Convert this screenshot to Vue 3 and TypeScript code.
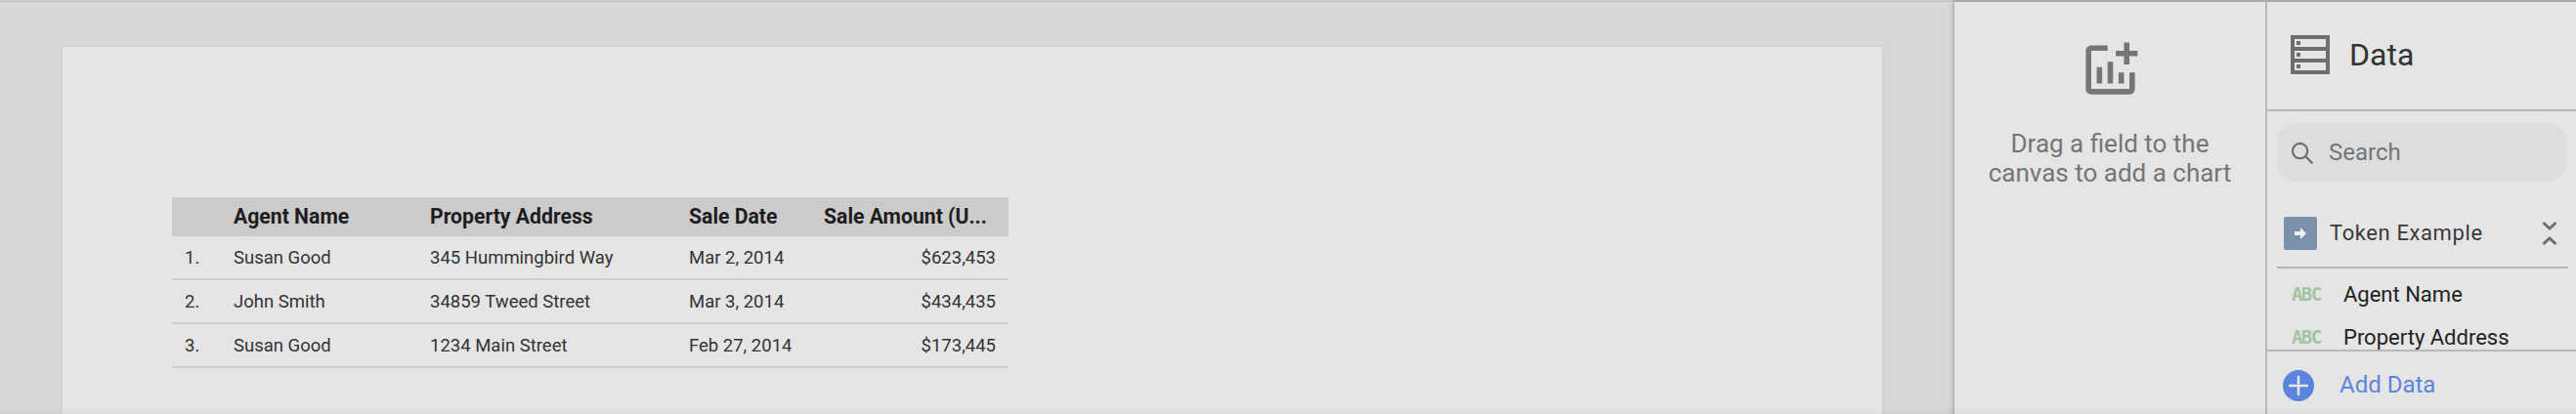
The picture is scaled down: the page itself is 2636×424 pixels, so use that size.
<script setup lang="ts">
const rows = [
  { name: "Susan Good", address: "345 Hummingbird Way", date: "Mar 2, 2014", amount: "$623,453" },
  { name: "John Smith", address: "34859 Tweed Street", date: "Mar 3, 2014", amount: "$434,435" },
  { name: "Susan Good", address: "1234 Main Street", date: "Feb 27, 2014", amount: "$173,445" },
];
const fields = ["Agent Name", "Property Address"];
</script>

<template>
  <div class="editor">
    <main class="canvas">
      <section class="page">
        <div class="table">
          <div class="row head">
            <span></span>
            <span>Agent Name</span>
            <span>Property Address</span>
            <span>Sale Date</span>
            <span>Sale Amount (U...</span>
          </div>
          <div v-for="(row, i) in rows" :key="i" class="row">
            <span>{{ i + 1 }}.</span>
            <span>{{ row.name }}</span>
            <span>{{ row.address }}</span>
            <span>{{ row.date }}</span>
            <span class="amount">{{ row.amount }}</span>
          </div>
        </div>
      </section>
    </main>

    <aside class="props">
      <svg class="add-chart" viewBox="0 0 24 24" fill="#757575">
        <path d="M22 5v2h-3v3h-2V7h-3V5h3V2h2v3h3zm-3 14H5V5h6V3H5c-1.1 0-2 .9-2 2v14c0 1.1.9 2 2 2h14c1.1 0 2-.9 2-2v-6h-2v6zm-4-6v4h2v-4h-2zm-4 4h2V9h-2v8zm-2 0v-6H7v6h2z" />
      </svg>
      <p class="hint">Drag a field to the<br />canvas to add a chart</p>
    </aside>

    <aside class="data">
      <header class="data-head">
        <svg class="data-icon" viewBox="0 0 40 40">
          <path fill="#6e6e6e" fill-rule="evenodd" d="M0 0h40v40H0zM4 4v8h32V4zM4 16v8h32v-8zM4 28v8h32v-8z" />
          <path fill="#6e6e6e" d="M6 6h4v4H6zM6 18h4v4H6zM6 30h4v4H6z" />
        </svg>
        <h1>Data</h1>
      </header>

      <div class="search">
        <svg class="search-icon" viewBox="0 0 24 24" fill="none" stroke="#6b6b6b" stroke-width="2.2">
          <circle cx="10" cy="10" r="8" />
          <path d="M16 16l7.500 7.500" />
        </svg>
        <span>Search</span>
      </div>

      <div class="source">
        <span class="source-icon">
          <svg viewBox="0 0 14 14" width="14" height="14" fill="#eef1f5">
            <path d="M1 5h6V1l6 6-6 6V9H1z" />
          </svg>
        </span>
        <span class="source-name">Token Example</span>
        <svg class="collapse" viewBox="0 0 16 26" fill="none" stroke="#6e6e6e" stroke-width="3">
          <path d="M1.500 2l6.500 6 6.500-6M1.500 24l6.500-6 6.500 6" />
        </svg>
      </div>

      <ul class="fields">
        <li v-for="field in fields" :key="field">
          <span class="abc">ABC</span>
          <span>{{ field }}</span>
        </li>
      </ul>

      <footer class="add-data">
        <svg class="plus" viewBox="0 0 32 32">
          <circle cx="16" cy="16" r="16" fill="#5b84dc" />
          <path d="M16 6v20M6 16h20" stroke="#e5e5e5" stroke-width="2.500" />
        </svg>
        <span class="add-label">Add Data</span>
      </footer>
    </aside>
  </div>
</template>

<style>
html,
body {
  margin: 0;
  overflow: hidden;
}
</style>

<style scoped>
.editor {
  position: relative;
  display: flex;
  width: 2636px;
  height: 424px;
  overflow: hidden;
  font-family: Roboto, sans-serif;
  background: #e5e5e5;
}

.editor::after {
  content: "";
  position: absolute;
  left: 0;
  right: 0;
  bottom: 0;
  height: 5px;
  background: linear-gradient(rgba(0, 0, 0, 0), rgba(0, 0, 0, 0.035));
}

.canvas {
  width: 1998px;
  flex: none;
  box-sizing: border-box;
  padding: 45px 72px 0 64px;
  background: #d7d7d7;
  border-top: 3px solid #c9c9c9;
  box-shadow: inset 0 1px #e2e2e2, inset -6px 0 6px -6px #bdbdbd;
}

.page {
  height: 400px;
  box-sizing: border-box;
  padding: 154px 0 0 112px;
  background: #e5e5e5;
  box-shadow: 0 0 3px #c4c4c4;
}

.table {
  width: 856px;
}

.row {
  display: grid;
  grid-template-columns: 63px 201px 265px 138px 189px;
  align-items: center;
  height: 45px;
  box-sizing: border-box;
  border-bottom: 2px solid #cdcdcd;
  font-size: 18.5px;
  color: #333;
}

.row span:first-child {
  padding-left: 13px;
}

.head {
  height: 40px;
  padding-bottom: 2px;
  border-bottom: 0;
  background: #cbcbcb;
  font-size: 21.2px;
  font-weight: 700;
  color: #1d1d1d;
}

.amount {
  padding-right: 13px;
  text-align: right;
}

.props {
  width: 322px;
  flex: none;
  box-sizing: border-box;
  display: flex;
  flex-direction: column;
  align-items: center;
  border-left: 2px solid #b8b8b8;
  border-right: 2px solid #b8b8b8;
  border-top: 2px solid #a8a8a8;
}

.add-chart {
  width: 67px;
  height: 67px;
  margin-top: 36px;
}

.hint {
  margin: 27px 0 0;
  font-size: 26px;
  line-height: 30px;
  text-align: center;
  color: #757575;
}

.data {
  flex: 1;
  display: flex;
  flex-direction: column;
  border-top: 2px solid #a8a8a8;
}

.data-head {
  display: flex;
  align-items: center;
  gap: 20px;
  height: 112px;
  flex: none;
  box-sizing: border-box;
  padding: 0 0 2px 24px;
  border-bottom: 2px solid #b8b8b8;
}

.data-icon {
  width: 40px;
  height: 40px;
}

h1 {
  margin: 0;
  font-size: 32px;
  font-weight: 400;
  color: #333;
}

.search {
  display: flex;
  align-items: center;
  gap: 16px;
  width: 296px;
  height: 60px;
  flex: none;
  box-sizing: border-box;
  margin: 12px 0 0 10px;
  padding-left: 14px;
  border-radius: 20px;
  background: #dcddde;
  font-size: 24px;
  color: #757575;
}

.search-icon {
  width: 23px;
  height: 23px;
}

.source {
  display: flex;
  align-items: center;
  height: 89px;
  flex: none;
  box-sizing: border-box;
  width: 298px;
  margin-left: 10px;
  padding: 18px 0 0 7px;
  border-bottom: 2px solid #b5b5b8;
  font-size: 22px;
  color: #3a3a3a;
}

.source-icon {
  display: flex;
  align-items: center;
  justify-content: center;
  width: 34px;
  height: 34px;
  border-radius: 2px;
  background: #7a90ab;
}

.source-name {
  margin-left: 13px;
  letter-spacing: 0.6px;
}

.collapse {
  width: 16px;
  height: 26px;
  margin-left: auto;
  margin-right: 11px;
}

.fields {
  flex: 1;
  margin: 0;
  padding: 4px 0 0 25px;
  min-height: 0;
  overflow: hidden;
  list-style: none;
  font-size: 22px;
  color: #222;
}

.fields li {
  display: flex;
  align-items: center;
  gap: 24px;
  height: 44px;
}

.abc {
  width: 29px;
  font-family: "DejaVu Sans Mono", monospace;
  font-size: 19px;
  font-weight: 700;
  letter-spacing: -1.6px;
  color: #a3c4a0;
}

.add-data {
  display: flex;
  align-items: center;
  gap: 26px;
  height: 66px;
  flex: none;
  box-sizing: border-box;
  padding: 6px 0 0 16px;
  border-top: 2px solid #b8b8b8;
  font-size: 24px;
  color: #5b84dc;
}

.add-label {
  margin-bottom: 3px;
}

.plus {
  width: 32px;
  height: 32px;
}
</style>
